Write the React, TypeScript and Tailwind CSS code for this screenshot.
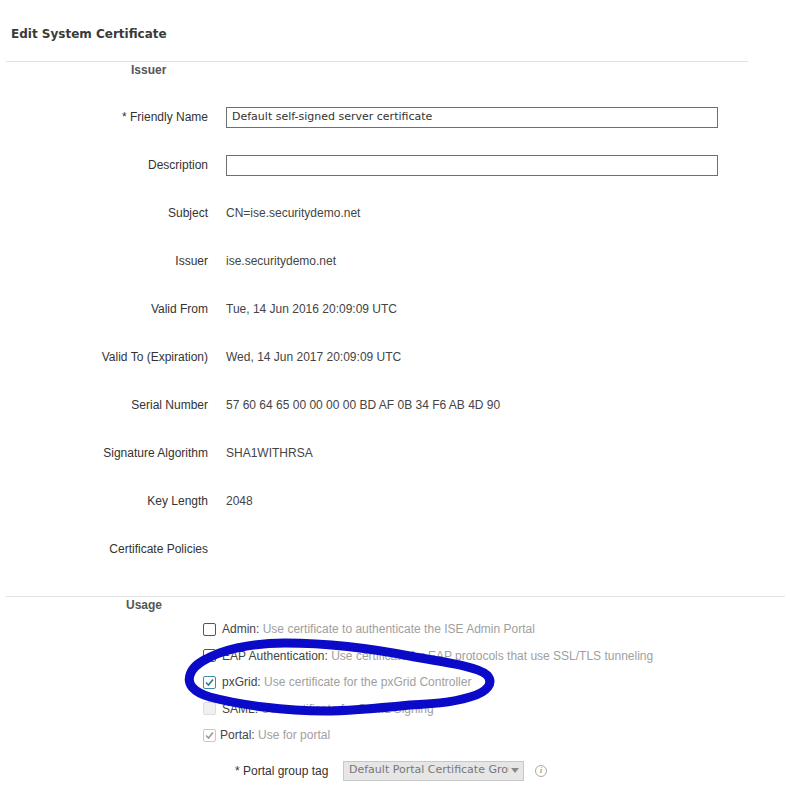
import React from "react";

const rows: { label: string; value?: string; input?: string }[] = [
  { label: "* Friendly Name", input: "Default self-signed server certificate" },
  { label: "Description", input: "" },
  { label: "Subject", value: "CN=ise.securitydemo.net" },
  { label: "Issuer", value: "ise.securitydemo.net" },
  { label: "Valid From", value: "Tue, 14 Jun 2016 20:09:09 UTC" },
  { label: "Valid To (Expiration)", value: "Wed, 14 Jun 2017 20:09:09 UTC" },
  { label: "Serial Number", value: "57 60 64 65 00 00 00 00 BD AF 0B 34 F6 AB 4D 90" },
  { label: "Signature Algorithm", value: "SHA1WITHRSA" },
  { label: "Key Length", value: "2048" },
  { label: "Certificate Policies", value: "" },
];

type Box = "off" | "on" | "disabled" | "disabledOn";

function CheckBox({ state }: { state: Box }) {
  if (state === "off")
    return <span className="block w-[13px] h-[13px] border border-[#555] rounded-[2px] bg-white shrink-0" />;
  if (state === "disabled")
    return <span className="block w-[13px] h-[13px] border border-[#dcdcdc] rounded-[2px] bg-[#f0f0f0] shrink-0" />;
  const color = state === "on" ? "#2a7d93" : "#9a9a9a";
  const border = state === "on" ? "border-[#3d8fa3]" : "border-[#c8c8c8]";
  return (
    <span className={`relative block w-[13px] h-[13px] border ${border} rounded-[2px] bg-white shrink-0`}>
      <svg viewBox="0 0 13 13" className="absolute left-[-1px] top-[-1px] w-[13px] h-[13px]">
        <path d="M3 6.5 L5.5 9 L10 3.5" fill="none" stroke={color} strokeWidth="1.6" />
      </svg>
    </span>
  );
}

const usage: { box: Box; name: string; desc: string; gap: string }[] = [
  { box: "off", name: "Admin:", desc: "Use certificate to authenticate the ISE Admin Portal", gap: "gap-[6px]" },
  { box: "off", name: "EAP Authentication:", desc: "Use certificate for EAP protocols that use SSL/TLS tunneling", gap: "gap-[6px]" },
  { box: "on", name: "pxGrid:", desc: "Use certificate for the pxGrid Controller", gap: "gap-[6px]" },
  { box: "disabled", name: "SAML:", desc: "Use certificate for SAML Signing", gap: "gap-[6px]" },
  { box: "disabledOn", name: "Portal:", desc: "Use for portal", gap: "gap-[4px]" },
];

export default function App() {
  return (
    <div className="relative w-[785px] h-[801px] bg-white overflow-hidden font-['Liberation_Sans',Arial,sans-serif] text-[12px] text-[#333]">
      <div className="h-[61px] pl-[11px] pt-[25px]">
        <h1 className="font-['DejaVu_Sans',Tahoma,sans-serif] font-bold text-[12px] leading-[18px] text-[#3a3a3a]">
          Edit System Certificate
        </h1>
      </div>
      <div className="ml-[6px] w-[742px] h-px bg-[#e2e2e2]" />
      <div className="h-[16px] leading-[16px] pl-[131px] font-bold text-[#555]">Issuer</div>

      <div className="mt-[15px] flex flex-col">
        {rows.map((r) => (
          <div key={r.label} className="h-[48px] flex items-center">
            <div className="w-[208px] text-right shrink-0 text-[#333]">{r.label}</div>
            <div className="ml-[18px] flex-1">
              {r.input !== undefined ? (
                <div className="w-[492px] h-[21px] border border-[#707070] flex items-center pl-[5px] font-['DejaVu_Sans',Tahoma,sans-serif] text-[11px] text-[#333]">
                  {r.input}
                </div>
              ) : (
                <span className="text-[#444]">{r.value}</span>
              )}
            </div>
          </div>
        ))}
      </div>

      <div className="mt-[23px] ml-[6px] w-[779px] h-px bg-[#e2e2e2]" />
      <div className="h-[16px] leading-[16px] pl-[126px] font-bold text-[#555]">Usage</div>

      <div className="mt-[3px] flex flex-col pl-[203px]">
        {usage.map((u) => (
          <div key={u.name} className={`h-[26.5px] flex items-center ${u.gap}`}>
            <CheckBox state={u.box} />
            <span className="text-[#444]">
              {u.name} <span className="text-[#a0a0a0]">{u.desc}</span>
            </span>
          </div>
        ))}
      </div>

      <div className="mt-[12px] flex items-center h-[20px] pl-[235px]">
        <span className="text-[#333] w-[108px]">* Portal group tag</span>
        <div className="w-[181px] h-[20px] border border-[#c8c8c8] bg-[#e6e6e6] flex items-center pl-[5px] pr-[4px] font-['DejaVu_Sans',Tahoma,sans-serif] text-[11px] text-[#777]">
          <span className="flex-1 min-w-0 whitespace-nowrap overflow-hidden">Default Portal Certificate Grou</span>
          <svg viewBox="0 0 8 5" className="w-[8px] h-[5px] ml-[2px] shrink-0">
            <path d="M0 0 L8 0 L4 5 Z" fill="#888" />
          </svg>
        </div>
        <span className="ml-[11px] w-[12px] h-[12px] rounded-full border border-[#aaa] flex items-center justify-center font-['Liberation_Serif',serif] italic text-[9px] text-[#777] leading-none">
          i
        </span>
      </div>

      <svg className="absolute left-0 top-0 pointer-events-none" width="785" height="801" viewBox="0 0 785 801">
        <path
          d="M203 661 C 220 650, 250 643, 285 643 C 330 643, 380 650, 415 657 C 450 663, 478 667, 487 675 C 494 683, 488 692, 470 697 C 450 703, 430 704, 410 705 C 380 708, 350 711, 325 711 C 285 711, 240 705, 210 697 C 193 692, 187 684, 190 675 C 192 668, 197 664, 206 659"
          fill="none"
          stroke="#0a0ac8"
          strokeWidth="9"
          strokeLinecap="round"
          strokeLinejoin="round"
        />
      </svg>
    </div>
  );
}
